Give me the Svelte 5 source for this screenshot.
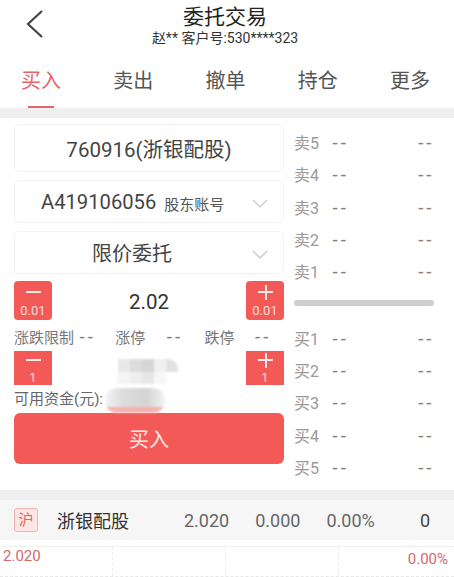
<script>
  const tabs = ['买入', '卖出', '撤单', '持仓', '更多'];
  const sells = ['卖5', '卖4', '卖3', '卖2', '卖1'];
  const buys = ['买1', '买2', '买3', '买4', '买5'];
  const blurCells = ['#e8e8e8', '#dcdcdc', '#d6d6d6', '#f0f0f0', '#e2e2e2', '#f4f4f4', '#eeeeee', '#e6e6e6', '#f6f6f6', '#ffffff'];
</script>

<div class="page">
  <header class="header">
    <svg class="back" width="20" height="30" viewBox="0 0 20 30">
      <path d="M17 2 L3 15 L17 28" fill="none" stroke="#444" stroke-width="2.2" />
    </svg>
    <div class="title">委托交易</div>
    <div class="subtitle">赵** 客户号:530****323</div>
  </header>

  <nav class="tabs">
    {#each tabs as tab, i}
      <div class="tab" class:active={i === 0}>{tab}</div>
    {/each}
  </nav>

  <main class="trade">
    <section class="form">
      <div class="card code">760916(浙银配股)</div>
      <div class="card select account">
        <span class="account-no">A419106056</span>
        <span class="account-label">股东账号</span>
        <svg class="chevron" width="16" height="9" viewBox="0 0 16 9"><path d="M1 1 L8 8 L15 1" fill="none" stroke="#c4c4c4" stroke-width="1.2" /></svg>
      </div>
      <div class="card select order-type">
        限价委托
        <svg class="chevron" width="16" height="9" viewBox="0 0 16 9"><path d="M1 1 L8 8 L15 1" fill="none" stroke="#c4c4c4" stroke-width="1.2" /></svg>
      </div>

      <div class="stepper price">
        <button class="step"><span class="sign minus"></span><span class="amount">0.01</span></button>
        <div class="value">2.02</div>
        <button class="step"><span class="sign plus"></span><span class="amount">0.01</span></button>
      </div>

      <div class="limits">
        <span>涨跌限制</span>
        <span class="dash">--</span>
        <span>涨停</span>
        <span class="dash">--</span>
        <span>跌停</span>
        <span class="dash">--</span>
      </div>

      <div class="stepper qty">
        <button class="step"><span class="sign minus"></span><span class="amount">1</span></button>
        <div class="value">
          <div class="mosaic">
            {#each blurCells as c}<i style="background: {c}"></i>{/each}
          </div>
        </div>
        <button class="step"><span class="sign plus"></span><span class="amount">1</span></button>
      </div>

      <div class="funds">
        可用资金(元):
        <div class="funds-blur"></div>
      </div>

      <button class="buy">买入</button>
    </section>

    <aside class="book">
      {#each sells as s}
        <div class="level"><span class="name">{s}</span><span class="dash">--</span><span class="dash">--</span></div>
      {/each}
      <div class="divider"></div>
      {#each buys as b}
        <div class="level"><span class="name">{b}</span><span class="dash">--</span><span class="dash">--</span></div>
      {/each}
    </aside>
  </main>

  <section class="holding">
    <span class="market">沪</span>
    <span class="stock-name">浙银配股</span>
    <span class="num">2.020</span>
    <span class="num change">0.000</span>
    <span class="num percent">0.00%</span>
    <span class="num count">0</span>
  </section>

  <section class="chart">
    <div class="grid">
      <div></div>
      <div></div>
      <div></div>
      <div></div>
    </div>
    <span class="chart-price">2.020</span>
    <span class="chart-pct">0.00%</span>
  </section>
</div>

<style>
  :global(body) {
    margin: 0;
    background: #fff;
  }

  .page {
    width: 454px;
    height: 577px;
    overflow: hidden;
    font-family: Roboto, "Noto Sans CJK SC", sans-serif;
    color: #333;
  }

  .header {
    position: relative;
    height: 50px;
    display: flex;
    flex-direction: column;
    align-items: center;
    padding: 5px 4px 0 0;
    box-sizing: border-box;
  }

  .back {
    position: absolute;
    left: 25px;
    top: 9px;
  }

  .title {
    font-size: 21px;
    line-height: 25px;
    color: #222;
  }

  .subtitle {
    font-size: 14px;
    line-height: 16px;
    color: #333;
  }

  .tabs {
    height: 58px;
    display: flex;
    justify-content: space-between;
    padding: 0 24px 0 21px;
    box-sizing: border-box;
  }

  .tab {
    position: relative;
    width: 40px;
    font-size: 20px;
    line-height: 62px;
    text-align: center;
    color: #555;
    white-space: nowrap;
  }

  .tab.active {
    color: #e8636a;
  }

  .tab.active::after {
    content: '';
    position: absolute;
    left: 7px;
    right: 7px;
    bottom: 0;
    height: 2px;
    background: #e5636a;
  }

  .trade {
    display: flex;
    border-top: 10px solid #efefef;
    border-bottom: 10px solid #efefef;
    height: 392px;
    box-sizing: border-box;
  }

  .form {
    width: 270px;
    margin-left: 14px;
    padding-top: 6px;
    display: flex;
    flex-direction: column;
  }

  .card {
    border: 1px solid #f3f3f3;
    border-radius: 5px;
    box-sizing: border-box;
    display: flex;
    align-items: center;
    justify-content: center;
    position: relative;
    color: #444;
  }

  .code {
    height: 48px;
    font-size: 20.5px;
    margin-bottom: 8px;
  }

  .select {
    height: 43px;
    margin-bottom: 8px;
  }

  .chevron {
    position: absolute;
    right: 15px;
    top: 18px;
  }

  .account {
    justify-content: flex-start;
    padding-left: 26px;
  }

  .account-no {
    font-size: 20.2px;
  }

  .account-label {
    font-size: 15px;
    margin-left: 8px;
    padding-top: 3px;
    color: #555;
  }

  .order-type {
    font-size: 20px;
    padding-right: 34px;
    margin-bottom: 7px;
  }

  .stepper {
    display: flex;
    justify-content: space-between;
  }

  .step {
    width: 38px;
    border: 0;
    padding: 0;
    background: #f35a57;
    color: #fbdcdc;
    border-radius: 4px;
    position: relative;
    font-family: inherit;
    display: block;
  }

  .price {
    height: 39px;
  }

  .qty {
    height: 34px;
  }

  .qty .step {
    border-radius: 0;
  }

  .value {
    flex: 1;
    text-align: center;
    font-size: 20.5px;
    line-height: 43px;
    color: #333;
    position: relative;
  }

  .sign {
    position: absolute;
    left: 12px;
    top: 10px;
    width: 15px;
    height: 2px;
    background: #fde9e9;
  }

  .qty .sign {
    top: 8px;
  }

  .sign.plus::after {
    content: '';
    position: absolute;
    left: 6.5px;
    top: -6.5px;
    width: 2px;
    height: 15px;
    background: #fde9e9;
  }

  .amount {
    position: absolute;
    left: 0;
    right: 0;
    bottom: 2px;
    font-size: 13px;
    line-height: 15px;
    text-align: center;
  }

  .qty .amount {
    bottom: 0;
  }

  .dash {
    font-family: "DejaVu Sans", sans-serif;
    font-size: 17px;
    letter-spacing: 2px;
    color: #808080;
  }

  .limits {
    height: 31px;
    display: flex;
    align-items: center;
    font-size: 15px;
    color: #777;
    white-space: nowrap;
    padding-top: 1px;
    box-sizing: border-box;
  }

  .limits span:nth-child(2) { margin-left: 5px; }
  .limits span:nth-child(3) { margin-left: 20px; }
  .limits span:nth-child(4) { margin-left: 21px; }
  .limits span:nth-child(5) { margin-left: 22px; }
  .limits span:nth-child(6) { margin-left: 20px; }

  .mosaic {
    position: absolute;
    left: 66px;
    top: 8px;
    width: 60px;
    height: 25px;
    display: grid;
    grid-template-columns: repeat(5, 1fr);
    grid-template-rows: repeat(2, 1fr);
    border-radius: 0 10px 10px 0;
    overflow: hidden;
    filter: blur(1px);
  }

  .mosaic i {
    display: block;
  }

  .funds {
    height: 28px;
    position: relative;
    display: flex;
    align-items: center;
    font-size: 15px;
    color: #666;
    padding-bottom: 3px;
    box-sizing: border-box;
  }

  .funds-blur {
    position: absolute;
    left: 91px;
    top: 3px;
    width: 60px;
    height: 25px;
    border-radius: 12px;
    background:
      linear-gradient(transparent 76%, #f4b3b0 76%),
      linear-gradient(90deg, #f4f4f4, #dcdcdc 30%, #d4d4d4 70%, #f4f4f4);
    filter: blur(1px);
    z-index: 1;
  }

  .buy {
    height: 51px;
    border: 0;
    border-radius: 6px;
    background: #f35a57;
    color: #fdeaea;
    font-family: inherit;
    font-size: 20px;
  }

  .book {
    margin-left: 10px;
    width: 140px;
    padding-top: 8px;
    display: flex;
    flex-direction: column;
    font-size: 16px;
    color: #999;
  }

  .level {
    height: 32.3px;
    display: flex;
    align-items: center;
  }

  .name {
    width: 38px;
    white-space: nowrap;
  }

  .level .dash:last-child {
    margin-left: auto;
    letter-spacing: 2px;
  }

  .divider {
    height: 6px;
    border-radius: 3px;
    background: #cfcfcd;
    margin: 13px 0 15px;
  }

  .holding {
    height: 40px;
    background: #f6f6f6;
    display: flex;
    align-items: center;
    font-size: 18px;
    color: #333;
  }

  .market {
    width: 24px;
    height: 24px;
    margin-left: 14px;
    border: 1px solid #f0b4b0;
    border-radius: 3px;
    background: #fbe6e3;
    color: #e8605c;
    font-size: 15px;
    line-height: 22px;
    text-align: center;
    box-sizing: border-box;
  }

  .stock-name {
    margin-left: 19px;
    width: 127px;
    color: #333;
  }

  .num {
    color: #666;
    font-size: 18px;
  }

  .change { margin-left: 26px; }
  .percent { margin-left: 26px; }
  .count { margin-left: auto; margin-right: 24px; color: #444; }

  .chart {
    height: 37px;
    position: relative;
    padding-top: 6px;
    box-sizing: border-box;
  }

  .grid {
    height: 31px;
    display: grid;
    grid-template-columns: 113px 113px 113px 1fr;
    border-top: 1px solid #f0f0f0;
    border-bottom: 1px dashed #e8e8e8;
    box-sizing: border-box;
  }

  .grid div {
    border-right: 1px dashed #ececec;
  }

  .grid div:last-child {
    border-right: 0;
  }

  .chart-price,
  .chart-pct {
    position: absolute;
    font-size: 15px;
    color: #d2696b;
  }

  .chart-price {
    left: 3px;
    top: 7px;
  }

  .chart-pct {
    right: 6px;
    top: 10px;
  }
</style>
